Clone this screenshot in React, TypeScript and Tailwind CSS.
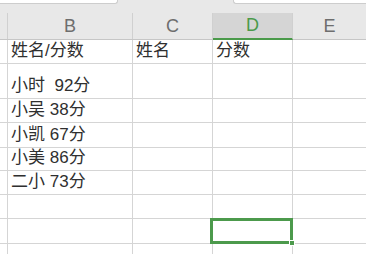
const cols = [
  { key: 'B', w: 'w-[125px]' },
  { key: 'C', w: 'w-[80px]' },
  { key: 'D', w: 'w-[80px]' },
];

const rows: { h: string; b: string; c: string; d: string }[] = [
  { h: 'h-[24px]', b: '姓名/分数', c: '姓名', d: '分数' },
  { h: 'h-[35px]', b: '小时  92分', c: '', d: '' },
  { h: 'h-[24px]', b: '小吴 38分', c: '', d: '' },
  { h: 'h-[25px]', b: '小凯 67分', c: '', d: '' },
  { h: 'h-[23px]', b: '小美 86分', c: '', d: '' },
  { h: 'h-[24px]', b: '二小 73分', c: '', d: '' },
  { h: 'h-[24px]', b: '', c: '', d: '' },
  { h: 'h-[25px]', b: '', c: '', d: '' },
  { h: 'h-[24px]', b: '', c: '', d: '' },
];

function Cell({ w, text }: { w: string; text: string }) {
  return (
    <div className={`${w} h-full shrink-0 border-r border-[#d5d5d5] flex items-end pl-[3px] pb-[2px] text-[17px] leading-[20px] text-[#2f2f2f] whitespace-pre`}>
      {text}
    </div>
  );
}

export default function App() {
  return (
    <div
      className="relative w-[366px] h-[254px] overflow-hidden bg-white"
      style={{ fontFamily: '"Liberation Sans", "Noto Sans CJK SC", sans-serif' }}
    >
      {/* top strip */}
      <div className="h-[13px] bg-[#e8e8e8] flex items-start">
        <div className="w-[118px] h-[4px] bg-white border-b border-r border-[#cdcdcd] rounded-br-[3px]" />
        <div className="w-[115px]" />
        <div className="flex-1 h-[4px] bg-white border-b border-l border-[#cdcdcd] rounded-bl-[3px]" />
      </div>

      {/* column headers */}
      <div className="h-[27px] flex bg-[#e8e8e8] border-b border-[#c6c6c6] text-[18px] text-[#6e6e6e]">
        <div className="w-[8px] shrink-0 border-r border-[#d0d0d0]" />
        <div className="w-[125px] shrink-0 border-r border-[#d0d0d0] flex items-center justify-center">B</div>
        <div className="w-[80px] shrink-0 border-r border-[#d0d0d0] flex items-center justify-center">C</div>
        <div className="w-[80px] shrink-0 bg-[#d5d5d5] border-r border-[#d0d0d0] border-b-2 border-b-[#4a9a4a] -mb-px flex items-center justify-center text-[#4a9a4a]">
          D
        </div>
        <div className="flex-1 flex items-center justify-center">E</div>
      </div>

      {/* rows */}
      {rows.map((r, i) => (
        <div key={i} className={`${r.h} flex border-b border-[#d5d5d5]`}>
          <div className="w-[8px] shrink-0 border-r border-[#d5d5d5]" />
          <Cell w={cols[0].w} text={r.b} />
          <Cell w={cols[1].w} text={r.c} />
          <Cell w={cols[2].w} text={r.d} />
          <div className="flex-1" />
        </div>
      ))}

      {/* selected cell */}
      <div className="absolute left-[210px] top-[218px] w-[83px] h-[26px] border-[3px] border-[#4c9a4c]" />
      <div className="absolute left-[289px] top-[240px] w-[6px] h-[6px] bg-[#4c9a4c] border border-white" />
    </div>
  );
}
